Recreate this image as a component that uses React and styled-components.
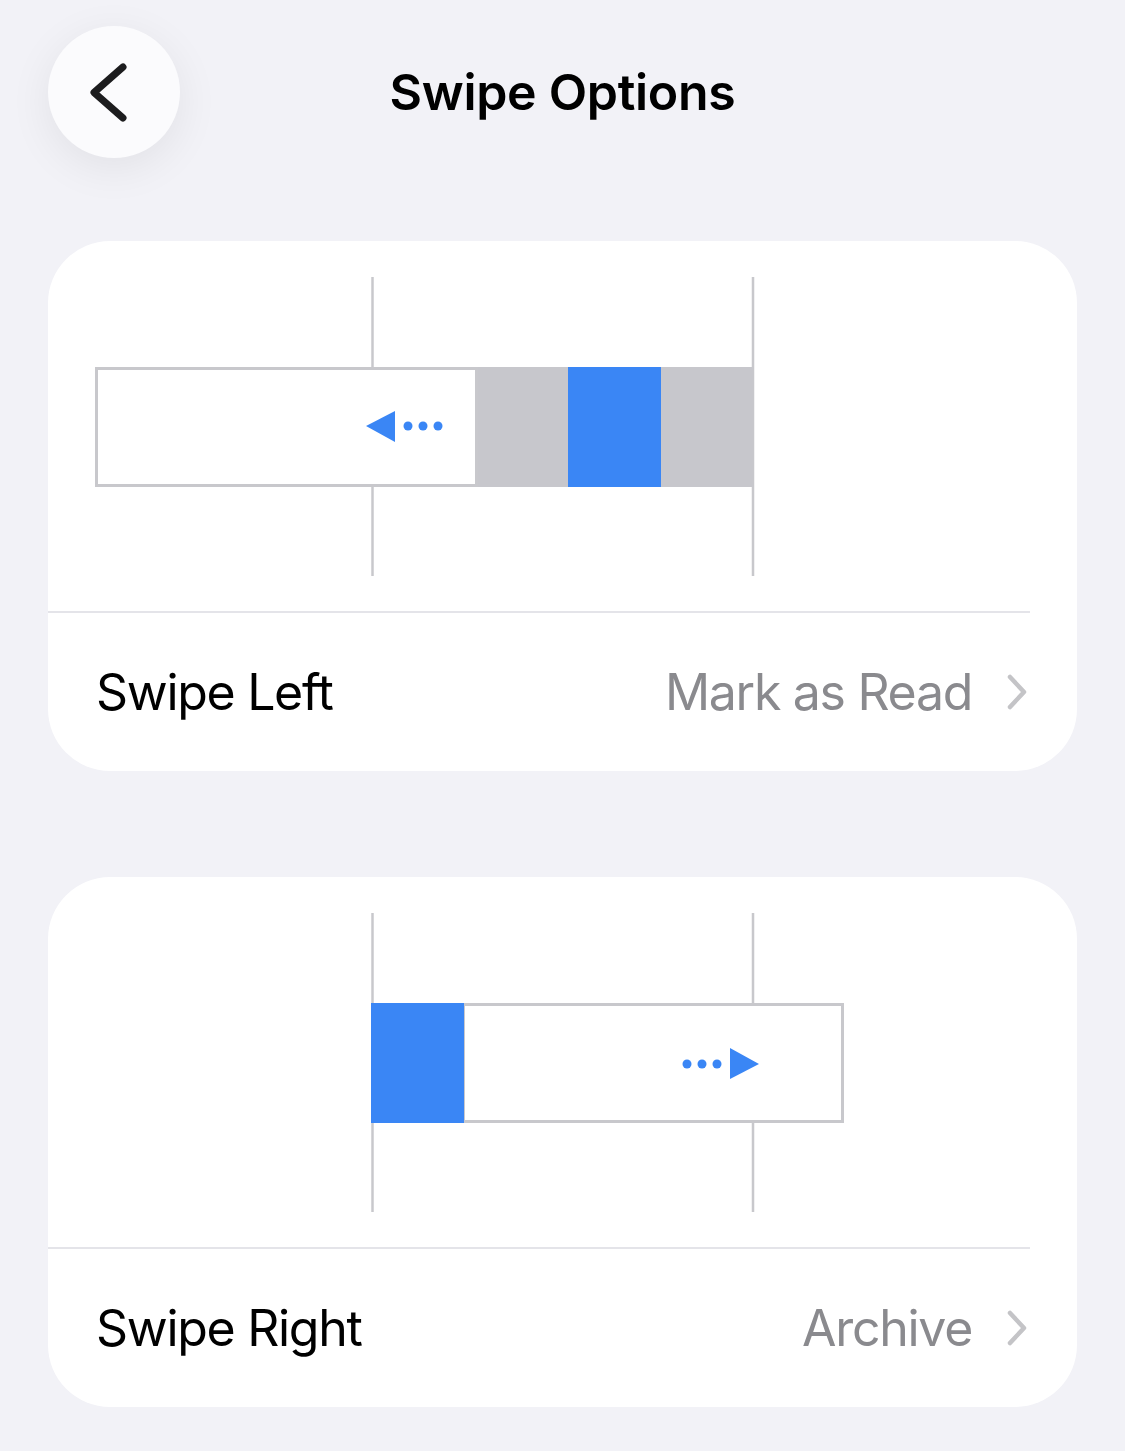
import React from "react";
import styled, { createGlobalStyle } from "styled-components";

const GlobalStyle = createGlobalStyle`
  html, body {
    margin: 0;
    padding: 0;
    background: #f2f2f7;
  }

  body {
    font-family: Inter, "Noto Sans", "Liberation Sans", sans-serif;
    -webkit-font-smoothing: antialiased;
  }
`;

const Page = styled.div`
  min-height: 1451px;
  padding: 26px 48px 40px 48px;
  box-sizing: border-box;
  background: #f2f2f7;
`;

const Header = styled.header`
  display: grid;
  grid-template-columns: 132px 1fr 132px;
  align-items: center;
  height: 132px;
  margin-bottom: 83px;
`;

const BackButton = styled.button`
  display: block;
  width: 132px;
  height: 132px;
  padding: 0;
  border: none;
  border-radius: 50%;
  background: #fbfbfd;
  box-shadow: 0 10px 44px rgba(0, 0, 0, 0.07);
  cursor: pointer;

  svg {
    display: block;
  }
`;

const Title = styled.h1`
  margin: 0;
  text-align: center;
  color: #000;
  font-size: 50px;
  font-weight: 600;
  letter-spacing: -0.3px;
`;

const CardList = styled.div`
  display: flex;
  flex-direction: column;
  gap: 106px;
`;

const Card = styled.section`
  overflow: hidden;
  border-radius: 62px;
  background: #fff;
`;

const Diagram = styled.div`
  height: 370px;

  svg {
    display: block;
  }
`;

const Divider = styled.div`
  height: 2px;
  margin-right: 47px;
  background: #e4e4e9;
`;

const Row = styled.div`
  display: flex;
  align-items: center;
  justify-content: space-between;
  height: 158px;
  padding: 0 49px 0 48px;
  cursor: pointer;
`;

const Label = styled.span`
  color: #000;
  font-size: 50px;
  font-weight: 400;
  letter-spacing: -1.3px;
`;

const Value = styled.span`
  display: flex;
  align-items: center;
  gap: 34px;
  color: #8a8a8e;
  font-size: 50px;
  letter-spacing: -1.3px;
`;

const LINE = "#c8c8cc";
const BLUE = "#3a86f5";
const GRAY = "#c7c7cc";

function BackChevron() {
  return (
    <svg width="132" height="132" viewBox="0 0 132 132">
      <path
        d="M75 41 L46 66.5 L75 92"
        fill="none"
        stroke="#1c1c1e"
        strokeWidth="7"
        strokeLinecap="round"
        strokeLinejoin="round"
      />
    </svg>
  );
}

function RowChevron() {
  return (
    <svg width="22" height="36" viewBox="0 0 22 36">
      <path
        d="M4 3 L18 18 L4 33"
        fill="none"
        stroke="#c4c4c7"
        strokeWidth="4.5"
        strokeLinecap="round"
        strokeLinejoin="round"
      />
    </svg>
  );
}

function Guides() {
  return (
    <g stroke={LINE} strokeWidth="2.5">
      <line x1="324.5" y1="36" x2="324.5" y2="335" />
      <line x1="705" y1="36" x2="705" y2="335" />
    </g>
  );
}

function Dots({ x, y }) {
  return (
    <g fill={BLUE}>
      <circle cx={x} cy={y} r="4.5" />
      <circle cx={x + 15} cy={y} r="4.5" />
      <circle cx={x + 30} cy={y} r="4.5" />
    </g>
  );
}

// message row pushed left, revealing two actions on the right
function SwipeLeftDiagram() {
  return (
    <svg width="1029" height="370" viewBox="0 0 1029 370">
      <Guides />
      <rect x="428" y="126" width="277" height="120" fill={GRAY} />
      <rect x="520" y="126" width="93" height="120" fill={BLUE} />
      <rect x="48.5" y="127.5" width="380" height="117" fill="#fff" stroke={LINE} strokeWidth="3" />
      <polygon points="318,185 347,170 347,201" fill={BLUE} />
      <Dots x={360} y={185} />
    </svg>
  );
}

// message row pushed right, revealing one action on the left
function SwipeRightDiagram() {
  return (
    <svg width="1029" height="370" viewBox="0 0 1029 370">
      <Guides />
      <rect x="415.5" y="127.5" width="379" height="117" fill="#fff" stroke={LINE} strokeWidth="3" />
      <rect x="323" y="126" width="93" height="120" fill={BLUE} />
      <Dots x={639} y={187} />
      <polygon points="682,171 711,187 682,202" fill={BLUE} />
    </svg>
  );
}

const options = [
  { label: "Swipe Left", value: "Mark as Read", Drawing: SwipeLeftDiagram },
  { label: "Swipe Right", value: "Archive", Drawing: SwipeRightDiagram }
];

function App() {
  return (
    <>
      <GlobalStyle />
      <Page>
        <Header>
          <BackButton aria-label="Back">
            <BackChevron />
          </BackButton>
          <Title>Swipe Options</Title>
          <div />
        </Header>
        <CardList>
          {options.map(({ label, value, Drawing }) => (
            <Card key={label}>
              <Diagram>
                <Drawing />
              </Diagram>
              <Divider />
              <Row>
                <Label>{label}</Label>
                <Value>
                  {value}
                  <RowChevron />
                </Value>
              </Row>
            </Card>
          ))}
        </CardList>
      </Page>
    </>
  );
}

export default App;
